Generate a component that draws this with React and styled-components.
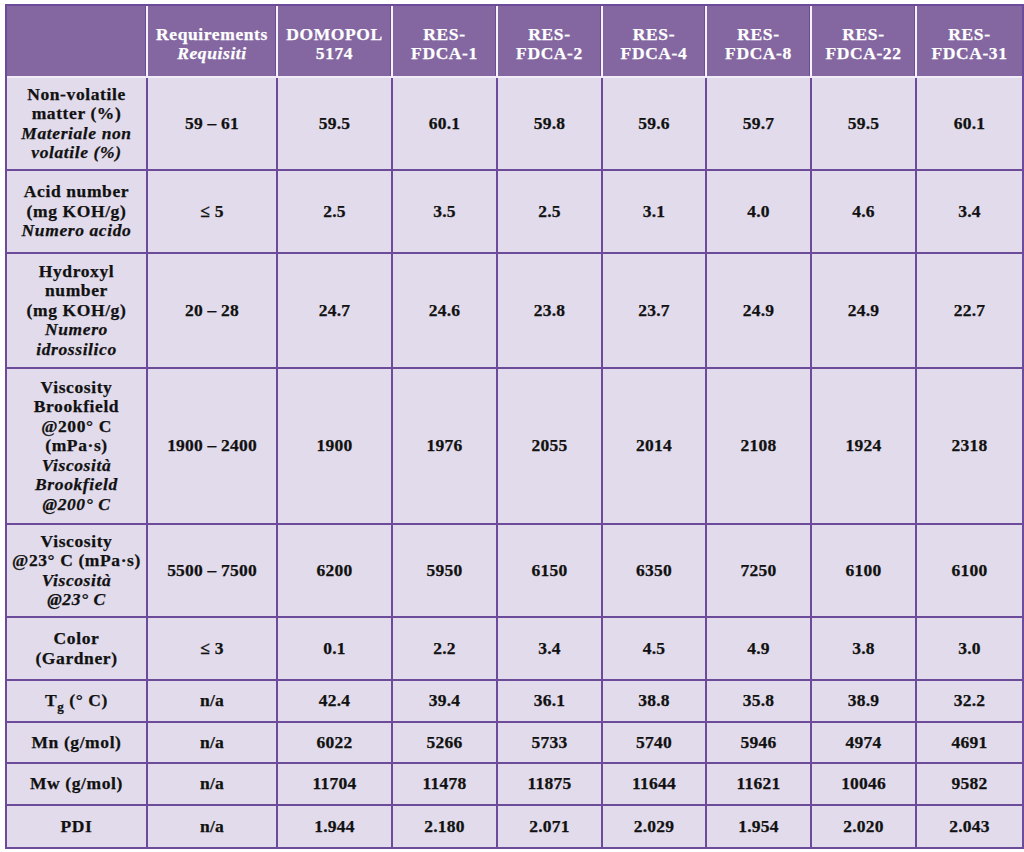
import styled, { createGlobalStyle } from "styled-components";

const GlobalStyle = createGlobalStyle`
    html, body {
        margin: 0;
        padding: 0;
        background: #ffffff;
    }
    body {
        font-family: "Liberation Serif", "Times New Roman", serif;
    }
`

const columns = ["DOMOPOL 5174", "RES- FDCA-1", "RES- FDCA-2", "RES- FDCA-4", "RES- FDCA-8", "RES- FDCA-22", "RES- FDCA-31"]
const widths = [141, 130, 115, 105, 105, 104, 105, 105, 105]

const rows = [
    { label: ["Non-volatile", "matter (%)"], it: ["Materiale non", "volatile (%)"], req: "59 – 61", h: 93,
      values: ["59.5", "60.1", "59.8", "59.6", "59.7", "59.5", "60.1"] },
    { label: ["Acid number", "(mg KOH/g)"], it: ["Numero acido"], req: "≤ 5", h: 83,
      values: ["2.5", "3.5", "2.5", "3.1", "4.0", "4.6", "3.4"] },
    { label: ["Hydroxyl", "number", "(mg KOH/g)"], it: ["Numero", "idrossilico"], req: "20 – 28", h: 115,
      values: ["24.7", "24.6", "23.8", "23.7", "24.9", "24.9", "22.7"] },
    { label: ["Viscosity", "Brookfield", "@200° C", "(mPa·s)"], it: ["Viscosità", "Brookfield", "@200° C"], req: "1900 – 2400", h: 156,
      values: ["1900", "1976", "2055", "2014", "2108", "1924", "2318"] },
    { label: ["Viscosity", "@23° C (mPa·s)"], it: ["Viscosità", "@23° C"], req: "5500 – 7500", h: 93,
      values: ["6200", "5950", "6150", "6350", "7250", "6100", "6100"] },
    { label: ["Color", "(Gardner)"], it: [], req: "≤ 3", h: 63,
      values: ["0.1", "2.2", "3.4", "4.5", "4.9", "3.8", "3.0"] },
    { label: ["Tg"], it: [], req: "n/a", h: 42,
      values: ["42.4", "39.4", "36.1", "38.8", "35.8", "38.9", "32.2"] },
    { label: ["Mn (g/mol)"], it: [], req: "n/a", h: 41,
      values: ["6022", "5266", "5733", "5740", "5946", "4974", "4691"] },
    { label: ["Mw (g/mol)"], it: [], req: "n/a", h: 42,
      values: ["11704", "11478", "11875", "11644", "11621", "10046", "9582"] },
    { label: ["PDI"], it: [], req: "n/a", h: 41,
      values: ["1.944", "2.180", "2.071", "2.029", "1.954", "2.020", "2.043"] },
]

const Label = ({ text }) => {
    if (text === "Tg") {
        return <Line>T<Sub>g</Sub> (° C)</Line>
    }
    return <Line>{text}</Line>
}

const App = () => {
    return (
        <Page>
            <GlobalStyle />
            <Table>
                <colgroup>
                    {widths.map((w, i) => (
                        <col key={i} style={{ width: w }} />
                    ))}
                </colgroup>
                <thead>
                    <tr>
                        <Head $h={72}></Head>
                        <Head $h={72}>
                            <Line>Requirements</Line>
                            <Line $italic>Requisiti</Line>
                        </Head>
                        {columns.map((c, i) => {
                            const parts = c.split(" ")
                            return (
                                <Head key={c} $h={72} $last={i === columns.length - 1}>
                                    {parts.map((p) => <Line key={p}>{p}</Line>)}
                                </Head>
                            )
                        })}
                    </tr>
                </thead>
                <tbody>
                    {rows.map((r, ri) => {
                        const lastRow = ri === rows.length - 1
                        return (
                            <tr key={ri}>
                                <Cell $h={r.h} $lastRow={lastRow} $text>
                                    {r.label.map((l) => <Label key={l} text={l} />)}
                                    {r.it.map((l) => <Line key={l} $italic>{l}</Line>)}
                                </Cell>
                                <Cell $h={r.h} $lastRow={lastRow}>{r.req}</Cell>
                                {r.values.map((v, vi) => (
                                    <Cell key={vi} $h={r.h} $lastRow={lastRow} $last={vi === r.values.length - 1}>
                                        {v}
                                    </Cell>
                                ))}
                            </tr>
                        )
                    })}
                </tbody>
            </Table>
        </Page>
    )
}

const Page = styled.div`
    padding: 4px 4px 0 5px;
`
const Table = styled.table`
    width: 1015px;
    table-layout: fixed;
    border-collapse: separate;
    border-spacing: 0;
    border: 2px solid #6c4c9a;
    font-size: 17.5px;
    font-weight: bold;
    line-height: 19.5px;
    text-align: center;
    -webkit-text-stroke: 0.25px currentColor;
`
const Head = styled.th`
    box-sizing: border-box;
    height: ${(p) => p.$h}px;
    padding: 6px 2px 0;
    background: #8467a1;
    color: #ffffff;
    letter-spacing: 0.6px;
    vertical-align: middle;
    border-right: ${(p) => (p.$last ? "none" : "2px solid #f6f2fa")};
    border-bottom: 2px solid #f0ebf6;
    box-shadow: ${(p) => (p.$last ? "none" : "inset -1px 0 0 #6c4c9a")};
`
const Cell = styled.td`
    box-sizing: border-box;
    height: ${(p) => p.$h}px;
    padding: 0 2px;
    background: #e1dbeb;
    color: #111111;
    letter-spacing: ${(p) => (p.$text ? "0.6px" : "0.2px")};
    vertical-align: middle;
    border-right: ${(p) => (p.$last ? "none" : "2px solid #6c4c9a")};
    border-bottom: ${(p) => (p.$lastRow ? "none" : "2px solid #6c4c9a")};
`
const Line = styled.div`
    font-style: ${(p) => (p.$italic ? "italic" : "normal")};
    white-space: nowrap;
`
const Sub = styled.sub`
    font-size: 13px;
    line-height: 0;
`

export default App
